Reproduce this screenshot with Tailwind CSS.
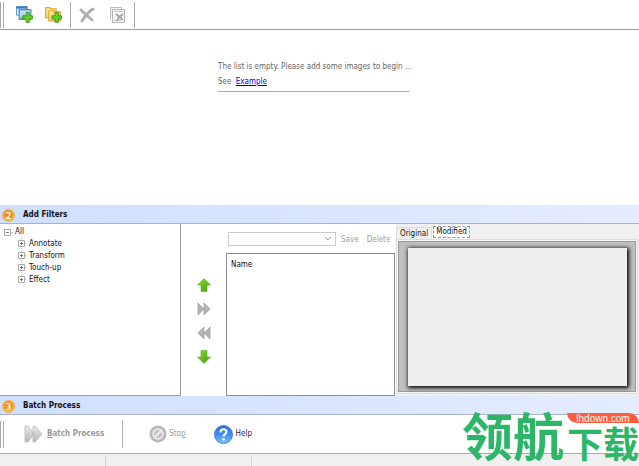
<!DOCTYPE html>
<html lang="en">
<head>
  <meta charset="UTF-8" />
  <meta name="viewport" content="width=device-width, initial-scale=1.0"/>
  <title>Batch Process</title>
  <script src="https://cdn.jsdelivr.net/npm/@tailwindcss/browser@4"></script>
</head>
<body class="relative flex min-h-screen flex-col overflow-x-hidden bg-white font-['DejaVu_Sans_Condensed','DejaVu_Sans',sans-serif] text-[8px] leading-[12px] text-[#111]">

  <!-- Shared gradients -->
  <svg class="absolute size-0" aria-hidden="true">
    <defs>
      <linearGradient id="green" x1="0" y1="0" x2="1" y2="1">
        <stop offset="0" stop-color="#8fe02c"/><stop offset="1" stop-color="#3f9a12"/>
      </linearGradient>
      <linearGradient id="folder" x1="0" y1="0" x2="1" y2="1">
        <stop offset="0" stop-color="#fff0a0"/><stop offset="1" stop-color="#eeb63c"/>
      </linearGradient>
      <linearGradient id="silver" x1="0" y1="0" x2="0" y2="1">
        <stop offset="0" stop-color="#e8e8e8"/><stop offset="1" stop-color="#b8b8b8"/>
      </linearGradient>
      <radialGradient id="gold" cx=".5" cy=".45" r=".5">
        <stop offset="0" stop-color="#ff6a10"/><stop offset=".6" stop-color="#ff8a10"/><stop offset="1" stop-color="#ffd040"/>
      </radialGradient>
      <linearGradient id="blue" x1="0" y1="0" x2="0" y2="1">
        <stop offset="0" stop-color="#2a6fd6"/><stop offset=".5" stop-color="#3f8ff0"/><stop offset="1" stop-color="#7cc4ff"/>
      </linearGradient>
    </defs>
  </svg>

  <!-- Image toolbar -->
  <div class="flex h-[30px] shrink-0 items-center border-b border-[#9c9c9c]">
    <span class="h-[26px] w-1 border-x border-[#a8a8a8]"></span>
    <button class="ml-3 flex" aria-label="Add images">
      <svg class="size-[17px]" viewBox="0 0 16 16">
        <rect x=".5" y=".5" width="10" height="8" fill="#dff0fc" stroke="#6b9fd0"/>
        <path d="M.5 1.5h10" stroke="#4379ba" stroke-width="2"/>
        <rect x="3" y="3.500" width="11" height="9" fill="#b7dcf6" stroke="#4379ba"/>
        <path d="M4 12l3-4 3 4z" fill="#5d9dd4"/>
        <path d="M9.500 6h3v3.200h3v3h-3v3.200h-3v-3.200h-3v-3h3z" fill="#62d321" stroke="#3a9618" stroke-width=".8"/>
      </svg>
    </button>
    <button class="ml-3 flex" aria-label="Add folder">
      <svg class="size-[17px]" viewBox="0 0 16 16">
        <path d="M.5 11V1.500h4l1 1h5V11z" fill="url(#folder)" stroke="#dba73a"/>
        <path d="M3.500 14v-9.500h4l1 1h6V14z" fill="url(#folder)" stroke="#dba73a"/>
        <path d="M9.500 6h3v3.200h3v3h-3v3.200h-3v-3.200h-3v-3h3z" fill="#62d321" stroke="#3a9618" stroke-width=".8"/>
      </svg>
    </button>
    <span class="ml-2 h-[26px] border-l border-[#a8a8a8]"></span>
    <button class="ml-2 flex" aria-label="Remove" disabled>
      <svg class="size-4" viewBox="0 0 16 16">
        <path d="M2 3l11 10M14 2C9 5 6 9 3 14" fill="none" stroke="#b0b0b0" stroke-width="3" stroke-linecap="round"/>
      </svg>
    </button>
    <button class="ml-[15px] flex" aria-label="Clear list" disabled>
      <svg class="size-4" viewBox="0 0 16 16">
        <path d="M.5 12.500V.5h11v3" fill="#f5f5f5" stroke="#bbb"/>
        <path d="M2.500 2.500h12v13h-12z" fill="#f7f7f7" stroke="#b5b5b5"/>
        <path d="M4 4.500h9M4 13.500h7" stroke="#c8c8c8"/>
        <path d="M6 7l7 6M13 7c-3 2-5 4-6 7" fill="none" stroke="#a5a5a5" stroke-width="2"/>
      </svg>
    </button>
    <span class="ml-2 h-[26px] border-l border-[#a8a8a8]"></span>
  </div>

  <!-- Empty image list -->
  <main class="min-h-[100px] flex-1 pt-[31px] text-[#666]">
    <div class="mx-auto w-[191px] translate-x-[-6px] border-b border-[#aaa] pb-[3px] whitespace-nowrap">
      <p>The list is empty. Please add some images to begin ...</p>
      <p class="mt-[3px]">See <a href="#" class="ml-0.5 text-[#0000ee] underline">Example</a></p>
    </div>
  </main>

  <!-- Step 2 -->
  <h2 class="flex h-[19px] shrink-0 items-center gap-2 border-b border-[#a9b2c8] bg-linear-to-r from-[#cfdfff] to-[#e4ecff] pt-[2px] pl-[2px] text-[8px] font-bold">
    <svg class="size-[13px]" viewBox="0 0 13 13">
      <circle cx="6.500" cy="6.500" r="6" fill="url(#gold)" stroke="#e0912a" stroke-width=".6"/>
      <text x="6.500" y="9.500" text-anchor="middle" font-size="9" fill="#fff">2</text>
    </svg>
    Add Filters
  </h2>

  <section class="flex h-[172px] shrink-0">
    <!-- Filter tree -->
    <ul class="w-[181px] shrink-0 border-r border-b border-[#9a9ca6] pt-[2px] pl-1">
      <li>
        <div class="flex items-center gap-[2px]">
          <svg class="h-[7px] w-[9px]" viewBox="0 0 9 7"><path d="M.5.5h6v6h-6z" fill="#fff" stroke="#aaa"/><path d="M2 3.500h3" stroke="#678"/><path d="M7 3.500h2" stroke="#bbb"/></svg>
          All
        </div>
        <ul class="ml-[14px]">
          <li class="flex items-center gap-[2px]">
            <svg class="h-3 w-[9px]" viewBox="0 0 9 12"><path d="M3.500 0v12M7 5.500h2" stroke="#bbb" stroke-dasharray="1"/><path d="M.5 2.500h6v6h-6z" fill="#fff" stroke="#aaa"/><path d="M2 5.500h3M3.500 4v3" stroke="#678"/></svg>
            Annotate
          </li>
          <li class="flex items-center gap-[2px]">
            <svg class="h-3 w-[9px]" viewBox="0 0 9 12"><path d="M3.500 0v12M7 5.500h2" stroke="#bbb" stroke-dasharray="1"/><path d="M.5 2.500h6v6h-6z" fill="#fff" stroke="#aaa"/><path d="M2 5.500h3M3.500 4v3" stroke="#678"/></svg>
            Transform
          </li>
          <li class="flex items-center gap-[2px]">
            <svg class="h-3 w-[9px]" viewBox="0 0 9 12"><path d="M3.500 0v12M7 5.500h2" stroke="#bbb" stroke-dasharray="1"/><path d="M.5 2.500h6v6h-6z" fill="#fff" stroke="#aaa"/><path d="M2 5.500h3M3.500 4v3" stroke="#678"/></svg>
            Touch-up
          </li>
          <li class="flex items-center gap-[2px]">
            <svg class="h-3 w-[9px]" viewBox="0 0 9 12"><path d="M3.500 0v3M7 5.500h2" stroke="#bbb" stroke-dasharray="1"/><path d="M.5 2.500h6v6h-6z" fill="#fff" stroke="#aaa"/><path d="M2 5.500h3M3.500 4v3" stroke="#678"/></svg>
            Effect
          </li>
        </ul>
      </li>
    </ul>

    <!-- Move buttons -->
    <div class="flex w-[45px] shrink-0 flex-col items-center gap-[10px] pt-[54px]">
      <button class="flex" aria-label="Move up">
        <svg class="size-[14px]" viewBox="0 0 14 14"><path d="M7 .5L13.500 7H10v6.500H4V7H.5z" fill="url(#green)" stroke="#57a92b" stroke-width=".6"/></svg>
      </button>
      <button class="flex" aria-label="Add filter">
        <svg class="size-[14px]" viewBox="0 0 14 14"><path d="M1 1l6 6-6 6zM7 1l6 6-6 6z" fill="#b4b4b4" stroke="#999" stroke-width=".7"/></svg>
      </button>
      <button class="flex" aria-label="Remove filter">
        <svg class="size-[14px]" viewBox="0 0 14 14"><path d="M7 1L1 7l6 6zM13 1L7 7l6 6z" fill="#b4b4b4" stroke="#999" stroke-width=".7"/></svg>
      </button>
      <button class="flex" aria-label="Move down">
        <svg class="size-[14px]" viewBox="0 0 14 14"><path d="M7 13.500L.5 7H4V.5h6V7h3.500z" fill="url(#green)" stroke="#57a92b" stroke-width=".6"/></svg>
      </button>
    </div>

    <!-- Selected filters -->
    <div class="flex w-[169px] shrink-0 flex-col pt-2">
      <div class="flex items-center text-[#a0a0a0]">
        <div class="relative ml-[2px]">
          <select aria-label="Filter set" class="block h-[14px] w-[108px] appearance-none border border-[#ccc] bg-white" disabled><option></option></select>
          <svg class="pointer-events-none absolute top-1 right-1 h-[6px] w-2" viewBox="0 0 8 6"><path d="M1 1l3 3 3-3" fill="none" stroke="#999"/></svg>
        </div>
        <button class="ml-[5px] pt-[2px]" disabled>Save</button>
        <button class="ml-2 pt-[2px]" disabled>Delete</button>
      </div>
      <div class="mt-[7px] flex-1 border border-[#8c9099] px-1 pt-[5px]">
        <table><thead><tr><th class="font-normal">Name</th></tr></thead></table>
      </div>
    </div>

    <!-- Preview -->
    <div class="ml-px flex min-w-0 flex-1 flex-col bg-[#f0f0f0] pt-px pr-px pb-[2px]">
      <div class="flex h-[14px] items-end">
        <button class="h-[12px] border-x border-t border-[#ddd] px-[3px]">Original</button>
        <button class="flex h-[14px] items-center bg-white px-px"><span class="border border-dashed border-[#999] px-[2px] leading-[10px]">Modified</span></button>
      </div>
      <div class="flex flex-1 border border-[#dcdcdc] bg-[#f7f7f7] p-px">
        <div class="flex flex-1 border border-[#999] bg-[#c0c0c0] pt-[6px] pr-2 pb-[5px] pl-[9px]">
          <div class="flex-1 bg-[#efefef] shadow-[1px_1px_4px_1px_#000]"></div>
        </div>
      </div>
    </div>
  </section>

  <!-- Step 3 -->
  <h2 class="flex h-[19px] shrink-0 items-center gap-2 border-b border-[#a9b2c8] bg-linear-to-r from-[#cfdfff] to-[#e4ecff] pt-[2px] pl-[2px] text-[8px] font-bold">
    <svg class="size-[13px]" viewBox="0 0 13 13">
      <circle cx="6.500" cy="6.500" r="6" fill="url(#gold)" stroke="#e0912a" stroke-width=".6"/>
      <text x="6.500" y="9.500" text-anchor="middle" font-size="9" fill="#fff">3</text>
    </svg>
    Batch Process
  </h2>

  <div class="flex h-[39px] shrink-0 items-center border-b border-[#aaa] text-[#999]">
    <span class="h-[27px] w-1 border-x border-[#a8a8a8]"></span>
    <button class="ml-5 flex items-center gap-1 font-bold" disabled>
      <svg class="h-[18px] w-[19px]" viewBox="0 0 19 18"><path d="M1 1h3l6 8-6 8H1zM9 1h2l7 8-7 8H9z" fill="url(#silver)" stroke="#bbb" stroke-width=".8" stroke-linejoin="round"/></svg>
      <span><u>B</u>atch Process</span>
    </button>
    <span class="ml-[18px] h-[28px] border-l border-[#b0b0b0]"></span>
    <button class="ml-[26px] flex items-center gap-[2px]" disabled>
      <svg class="size-[18px]" viewBox="0 0 18 18"><circle cx="9" cy="9" r="8.500" fill="#b9b9b9"/><circle cx="9" cy="9" r="5" fill="#c4c4c4" stroke="#eee" stroke-width="1.500"/><path d="M5.500 12.500l7-7" stroke="#eee" stroke-width="2"/></svg>
      <span>Sto<u>p</u></span>
    </button>
    <button class="ml-[28px] flex items-center gap-[3px] text-[#1a1a4a]">
      <svg class="size-[19px]" viewBox="0 0 19 19"><circle cx="9.500" cy="9.500" r="9" fill="url(#blue)" stroke="#4a80c8"/><path d="M6.500 7.500C6.500 3 12.500 3.500 12.500 7c0 2-3 2.300-3 4.500" fill="none" stroke="#fff" stroke-width="2.200"/><circle cx="9.500" cy="14.300" r="1.400" fill="#fff"/></svg>
      Help
    </button>
  </div>

  <!-- Status bar -->
  <footer class="flex h-3 shrink-0 bg-[#f0f0f0] pt-[2px]">
    <span class="w-[106px] border-r border-[#d4d4d4]"></span>
    <span class="w-[146px] border-r border-[#d4d4d4]"></span>
  </footer>

  <!-- Site mark -->
  <div class="absolute right-0 bottom-[5px] flex items-end font-['Noto_Sans_CJK_SC',sans-serif] font-bold whitespace-nowrap text-[#2db668]">
    <span class="text-[51px] leading-[54px]">领航</span>
    <div class="ml-[3px] flex flex-col">
      <span class="h-[10px] rounded-tr-full rounded-bl-full bg-[#ff5c3c] text-center font-['Liberation_Sans',sans-serif] text-[10px] leading-[11px] font-normal text-white">lhdown.com</span>
      <span class="text-[36px] leading-[38px]">下载</span>
    </div>
  </div>
</body>
</html>
